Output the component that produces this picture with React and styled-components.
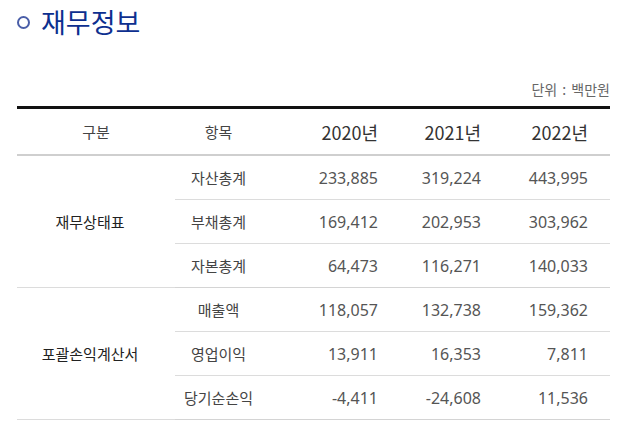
import styled, { createGlobalStyle } from "styled-components";

const GlobalStyle = createGlobalStyle`
  body {
    margin: 0;
    background: #fff;
    font-family: "Noto Sans CJK KR", "Noto Sans", sans-serif;
  }
`;

const rows = [
  {
    group: "재무상태표",
    items: [
      ["자산총계", "233,885", "319,224", "443,995"],
      ["부채총계", "169,412", "202,953", "303,962"],
      ["자본총계", "64,473", "116,271", "140,033"],
    ],
  },
  {
    group: "포괄손익계산서",
    items: [
      ["매출액", "118,057", "132,738", "159,362"],
      ["영업이익", "13,911", "16,353", "7,811"],
      ["당기순손익", "-4,411", "-24,608", "11,536"],
    ],
  },
];

export default function App() {
  return (
    <Page>
      <GlobalStyle />
      <Title>
        <Ring />
        재무정보
      </Title>
      <Unit>단위 : 백만원</Unit>
      <Table>
        <colgroup>
          <col style={{ width: 158 }} />
          <col style={{ width: 87 }} />
          <col style={{ width: 138 }} />
          <col style={{ width: 103 }} />
          <col style={{ width: 107 }} />
        </colgroup>
        <thead>
          <tr>
            <Th>구분</Th>
            <Th>항목</Th>
            <Th $year>2020년</Th>
            <Th $year>2021년</Th>
            <Th $year>2022년</Th>
          </tr>
        </thead>
        <tbody>
          {rows.map((g) =>
            g.items.map((it, i) => (
              <Row key={it[0]} $groupEnd={i === g.items.length - 1}>
                {i === 0 && <Group rowSpan={g.items.length}>{g.group}</Group>}
                <Item>{it[0]}</Item>
                <Num>{it[1]}</Num>
                <Num>{it[2]}</Num>
                <Num>{it[3]}</Num>
              </Row>
            ))
          )}
        </tbody>
      </Table>
    </Page>
  );
}

const Page = styled.div`
  width: 627px;
  height: 438px;
  padding: 0 17px;
  box-sizing: border-box;
  overflow: hidden;
`;

const Title = styled.h2`
  display: flex;
  align-items: center;
  gap: 11px;
  margin: 0;
  padding-top: 2px;
  height: 38px;
  font-size: 27px;
  font-weight: 400;
  color: #0d2f8f;
`;

const Ring = styled.span`
  width: 9px;
  height: 9px;
  margin: 2px 0 0 0;
  border: 2.5px solid #4a5ea8;
  border-radius: 50%;
`;

const Unit = styled.div`
  margin-top: 40px;
  text-align: right;
  font-size: 14px;
  line-height: 19px;
  color: #666;
  height: 26px;
  word-spacing: 2px;
`;

const Table = styled.table`
  width: 593px;
  border-collapse: collapse;
  table-layout: fixed;
  border-top: 3px solid #111;
`;

const Th = styled.th`
  height: 45px;
  padding: 0 ${({ $year }) => ($year ? "22px" : "0")} 0 0;
  text-align: ${({ $year }) => ($year ? "right" : "center")};
  font-weight: 400;
  font-size: ${({ $year }) => ($year ? "18px" : "15px")};
  color: ${({ $year }) => ($year ? "#333" : "#444")};
  border-bottom: 2px solid #cfcfcf;
`;

const Row = styled.tr`
  td {
    height: 43px;
    border-bottom: 1px solid ${({ $groupEnd }) => ($groupEnd ? "#d4d4d4" : "#dcdcdc")};
  }
`;

const Group = styled.td`
  text-align: center;
  font-size: 15px;
  color: #222;
  padding: 0 12px 0 0;
`;

const Item = styled.td`
  text-align: center;
  font-size: 15px;
  color: #444;
  padding: 0;
`;

const Num = styled.td`
  text-align: right;
  padding: 0 22px 0 0;
  font-family: "Noto Sans", sans-serif;
  font-size: 16px;
  color: #555;
`;
